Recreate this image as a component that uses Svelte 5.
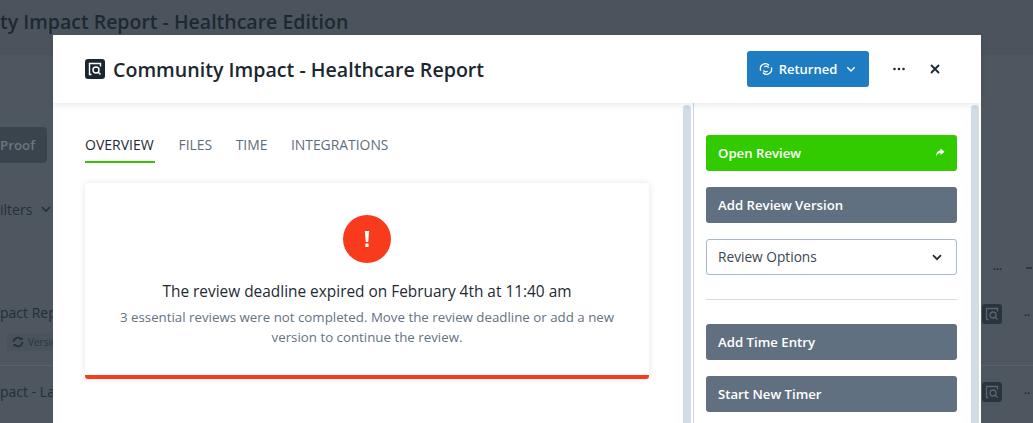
<script>
  const tabs = ['OVERVIEW', 'FILES', 'TIME', 'INTEGRATIONS'];
</script>

<div class="page">
  <header class="topbar">
    <h1 class="bg-title">ty Impact Report - Healthcare Edition</h1>
  </header>

  <div class="under">
    <div class="under-left">
      <div class="proof"><span>Proof</span></div>
      <div class="filters">
        <span>ilters</span>
        <svg width="12" height="12" viewBox="0 0 12 12"><path d="M2 4 6 8l4-4" fill="none" stroke="#242e36" stroke-width="1.600"/></svg>
      </div>
      <div class="bg-row-title">pact Repo</div>
      <div class="chip">
        <svg width="12" height="12" viewBox="0 0 12 12"><path d="M1.500 6a4.500 4.500 0 0 1 7.500-3.200M10.500 6A4.500 4.500 0 0 1 3 9.200" fill="none" stroke="#242e36" stroke-width="1.600"/><path d="M7.500 4h3V1M4.500 8h-3v3" fill="#242e36"/></svg>
        <span>Versio</span>
      </div>
      <div class="bg-rule"></div>
      <div class="bg-row-title second">pact - La</div>
    </div>

    <div class="under-right">
      <div class="right-head"><span class="dim-dots">•••</span><span class="dim-dash"></span></div>
      <div class="right-row first">
        <span class="dim-logo">
          <svg width="14" height="14" viewBox="0 0 14 14"><path d="M6 1.500H1.500v11h2M6 1.500h6.500v3" fill="none" stroke="#5b666f" stroke-width="1.300"/><circle cx="8" cy="8" r="3" fill="none" stroke="#5b666f" stroke-width="1.300"/><path d="m10 10 2.500 2.500" stroke="#5b666f" stroke-width="1.300"/></svg>
        </span>
        <span class="dim-dots two">••</span>
      </div>
      <div class="bg-rule"></div>
      <div class="right-row">
        <span class="dim-logo">
          <svg width="14" height="14" viewBox="0 0 14 14"><path d="M6 1.500H1.500v11h2M6 1.500h6.500v3" fill="none" stroke="#5b666f" stroke-width="1.300"/><circle cx="8" cy="8" r="3" fill="none" stroke="#5b666f" stroke-width="1.300"/><path d="m10 10 2.500 2.500" stroke="#5b666f" stroke-width="1.300"/></svg>
        </span>
        <span class="dim-dots two">••</span>
      </div>
    </div>
  </div>

  <section class="modal">
    <div class="modal-head">
      <div class="head-title">
        <span class="logo">
          <svg width="14" height="14" viewBox="0 0 14 14"><path d="M6 1.500H1.500v11h2M6 1.500h6.500v3" fill="none" stroke="#fff" stroke-width="1.400"/><circle cx="8" cy="8" r="3" fill="none" stroke="#fff" stroke-width="1.400"/><path d="m10 10 2.500 2.500" stroke="#fff" stroke-width="1.400"/></svg>
        </span>
        <h2>Community Impact - Healthcare Report</h2>
      </div>
      <div class="head-actions">
        <button class="status">
          <svg width="14" height="14" viewBox="0 0 14 14" fill="none" stroke="#fff" stroke-width="1.300" stroke-linecap="round"><path d="M1.500 8.200C1 5.500 2.500 2.800 5 1.900c1.800-.6 3.500-.1 4.700 1.100"/><path d="M12.500 5.800c.5 2.700-1 5.400-3.500 6.300-1.800.6-3.500.1-4.700-1.100"/><path d="M4.800 8.800c.8 1 2.200 1.300 3.400.7"/><path d="M9.200 5.200c-.8-1-2.200-1.300-3.400-.7"/></svg>
          <span>Returned</span>
          <svg width="12" height="12" viewBox="0 0 12 12"><path d="M2.300 4.300 6 8l3.700-3.700" fill="none" stroke="#fff" stroke-width="1.400"/></svg>
        </button>
        <span class="more" aria-label="More">
          <svg width="14" height="4" viewBox="0 0 14 4" fill="#1f2a33"><circle cx="2.500" cy="2" r="1.300"/><circle cx="7" cy="2" r="1.300"/><circle cx="11.500" cy="2" r="1.300"/></svg>
        </span>
        <span class="close" aria-label="Close">
          <svg width="12" height="12" viewBox="0 0 12 12"><path d="m2 2 8 8m0-8-8 8" stroke="#1f2a33" stroke-width="1.900"/></svg>
        </span>
      </div>
    </div>

    <div class="modal-body">
      <div class="main">
        <nav class="tabs">
          {#each tabs as tab, i}
            <span class="tab" class:active={i === 0}>{tab}</span>
          {/each}
        </nav>
        <div class="card">
          <div class="alert-icon">
            <svg width="10" height="18" viewBox="0 0 10 18" fill="#fff"><path d="M2.800 1h4.400L6.200 12H3.800z"/><rect x="3.400" y="13.600" width="3.200" height="3.400" rx=".6"/></svg>
          </div>
          <h3>The review deadline expired on February 4th at 11:40 am</h3>
          <p>3 essential reviews were not completed. Move the review deadline or add a new version to continue the review.</p>
        </div>
      </div>
      <div class="track"></div>
      <aside class="side">
        <button class="btn green">
          <span>Open Review</span>
          <svg width="10" height="10" viewBox="0 0 10 10" fill="#fff"><path d="M5.500 .5 9.500 3.800 5.500 7V5C3.500 5 2.200 6 1 8.500c0-3.500 1.500-5.800 4.500-6z"/></svg>
        </button>
        <button class="btn slate">Add Review Version</button>
        <button class="select">
          <span>Review Options</span>
          <svg width="12" height="12" viewBox="0 0 12 12"><path d="M2 4.200 6 8.200l4-4" fill="none" stroke="#1f2a33" stroke-width="1.700"/></svg>
        </button>
        <hr />
        <button class="btn slate">Add Time Entry</button>
        <button class="btn slate">Start New Timer</button>
      </aside>
      <div class="track"></div>
    </div>
  </section>
</div>

<style>
  :global(body) {
    margin: 0;
    overflow: hidden;
  }
  .page {
    position: relative;
    width: 1033px;
    height: 423px;
    overflow: hidden;
    background: #4e575f;
    font-family: "Open Sans", sans-serif;
    color: #1f2a33;
  }
  .topbar {
    height: 55px;
    box-sizing: border-box;
    border-bottom: 1px solid #4a535b;
    background: #4b545c;
  }
  .bg-title {
    margin: 0;
    height: 44px;
    line-height: 44px;
    white-space: nowrap;
    font-size: 19.500px;
    font-weight: 600;
    color: #1e2831;
  }
  .under {
    display: flex;
    justify-content: space-between;
  }
  .under-left {
    width: 53px;
    padding-top: 72px;
    overflow: hidden;
  }
  .proof {
    width: 47px;
    height: 36px;
    box-sizing: border-box;
    border-radius: 0 4px 4px 0;
    background: #3a444d;
    color: #6c767e;
    font-size: 13.300px;
    font-weight: 600;
    display: flex;
    align-items: center;
  }
  .filters {
    margin-top: 36px;
    height: 20px;
    display: flex;
    align-items: center;
    gap: 8px;
    font-size: 14px;
    color: #262f37;
    white-space: nowrap;
  }
  .bg-row-title {
    margin-top: 82px;
    height: 24px;
    line-height: 24px;
    font-size: 14px;
    color: #242e36;
    white-space: nowrap;
  }
  .bg-row-title.second {
    margin-top: 14px;
  }
  .chip {
    margin: 8px 0 0 7px;
    height: 18px;
    display: flex;
    align-items: center;
    gap: 4px;
    padding-left: 5px;
    font-size: 10px;
    color: #2b353d;
    background: #4a535b;
    white-space: nowrap;
  }
  .chip svg {
    flex: none;
  }
  .bg-rule {
    height: 1px;
    background: #596269;
    margin-top: 14px;
  }
  .under-right {
    width: 52px;
    padding-top: 203px;
    overflow: hidden;
  }
  .right-head {
    height: 20px;
    display: flex;
    align-items: center;
    padding-left: 12px;
    gap: 24px;
  }
  .dim-dots {
    font-size: 8px;
    color: #232d35;
    white-space: nowrap;
  }
  .dim-dash {
    width: 6px;
    height: 2px;
    background: #2f3941;
    flex: none;
  }
  .right-row {
    display: flex;
    align-items: center;
    gap: 22px;
    padding-top: 16px;
    height: 20px;
  }
  .right-row.first {
    padding-top: 26px;
    padding-bottom: 41px;
  }
  .under-right .bg-rule {
    margin-top: 0;
  }
  .dim-logo {
    width: 20px;
    height: 20px;
    flex: none;
    border-radius: 3px;
    background: #2a343c;
    display: flex;
    align-items: center;
    justify-content: center;
    margin-left: 1px;
  }
  .dim-dots.two {
    flex: none;
  }
  .modal {
    position: absolute;
    left: 53px;
    top: 35px;
    width: 928px;
    height: 420px;
    background: #fff;
    border-radius: 3px 3px 0 0;
  }
  .modal-head {
    position: relative;
    z-index: 1;
    height: 68px;
    box-sizing: border-box;
    padding: 0 32px;
    display: flex;
    align-items: center;
    justify-content: space-between;
    background: #fff;
    box-shadow: 0 2px 6px rgba(30, 40, 50, 0.1);
  }
  .head-title {
    display: flex;
    align-items: center;
    gap: 8px;
  }
  .logo {
    width: 20px;
    height: 20px;
    border-radius: 3px;
    background: #1b2730;
    display: flex;
    align-items: center;
    justify-content: center;
  }
  h2 {
    margin: 0;
    padding-top: 2px;
    font-size: 19.630px;
    line-height: 28px;
    font-weight: 600;
    color: #1b2730;
  }
  .head-actions {
    display: flex;
    align-items: center;
    padding-right: 8px;
  }
  .status {
    width: 122px;
    height: 36px;
    border: 0;
    border-radius: 3px;
    background: #1e7cc2;
    color: #fff;
    font: 600 13px "Open Sans", sans-serif;
    display: flex;
    align-items: center;
    justify-content: center;
    gap: 6px;
    padding: 0;
  }
  .status span {
    margin-right: 2px;
  }
  .more {
    margin-left: 23px;
    display: flex;
  }
  .close {
    margin-left: 23px;
    display: flex;
  }
  .modal-body {
    display: flex;
    height: 352px;
  }
  .main {
    width: 630px;
    box-sizing: border-box;
    padding: 32px 34px 0 32px;
    flex: none;
  }
  .tabs {
    display: flex;
    gap: 23.500px;
  }
  .tab {
    font-size: 13.900px;
    line-height: 20px;
    padding-bottom: 6px;
    border-bottom: 2px solid transparent;
    color: #5f6e7d;
  }
  .tab.active {
    min-width: 70px;
    font-size: 14px;
    color: #1f2a33;
    border-bottom-color: #35c400;
  }
  .card {
    margin-top: 20px;
    height: 196px;
    box-sizing: border-box;
    padding-top: 32px;
    border-bottom: 4px solid #f93b1d;
    border-radius: 3px;
    box-shadow: 0 0 6px rgba(30, 40, 50, 0.12);
    display: flex;
    flex-direction: column;
    align-items: center;
    text-align: center;
  }
  .alert-icon {
    width: 48px;
    height: 48px;
    border-radius: 50%;
    background: #f93b1d;
    display: flex;
    align-items: center;
    justify-content: center;
  }
  h3 {
    margin: 18px 0 0;
    font-size: 15.420px;
    line-height: 22px;
    font-weight: 500;
    color: #1f2a33;
  }
  p {
    margin: 4px 0 0;
    width: 520px;
    font-size: 13.300px;
    line-height: 20px;
    color: #647282;
  }
  .track {
    width: 8px;
    margin-top: 2px;
    flex: none;
    background: #d3dbe5;
    border-radius: 4px 4px 0 0;
  }
  .side {
    width: 277px;
    flex: none;
    margin-left: 2px;
    border-left: 1px solid #cbd5e0;
    padding-top: 32px;
    display: flex;
    flex-direction: column;
    align-items: center;
  }
  .btn {
    width: 251px;
    height: 36px;
    box-sizing: border-box;
    margin: 0 2px 16px 0;
    padding: 0 12px;
    border: 0;
    border-radius: 3px;
    color: #fff;
    font: 600 13.200px "Open Sans", sans-serif;
    display: flex;
    align-items: center;
    justify-content: space-between;
    flex: none;
  }
  .green {
    background: #32cb00;
  }
  .slate {
    background: #617080;
  }
  .select {
    width: 251px;
    height: 36px;
    box-sizing: border-box;
    margin: 0 2px 0 0;
    padding: 0 13px 1px 11px;
    border: 1px solid #a9b8ca;
    border-radius: 3px;
    background: #fff;
    color: #3a4652;
    font: 400 13.700px "Open Sans", sans-serif;
    display: flex;
    align-items: center;
    justify-content: space-between;
    flex: none;
  }
  hr {
    width: 251px;
    margin: 24px 2px 24px 0;
    border: 0;
    border-top: 1px solid #d3dbe5;
    flex: none;
  }
</style>
